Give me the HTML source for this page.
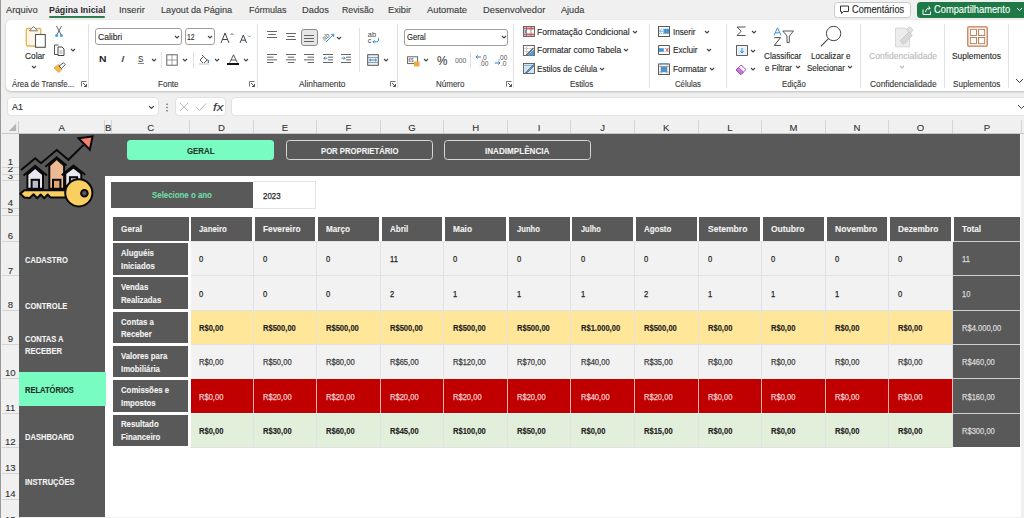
<!DOCTYPE html><html><head><meta charset="utf-8"><title>Excel</title><style>
*{margin:0;padding:0;box-sizing:border-box}
html,body{width:1024px;height:518px;overflow:hidden;background:#f0f0f0;position:relative;font-family:"Liberation Sans", sans-serif}
.a{position:absolute}
.t{position:absolute;white-space:nowrap;line-height:1;transform-origin:0 0}
</style></head><body>
<div class="a" style="left:0px;top:0px;width:1024px;height:518px;background:#f0f0f0;"></div>
<div class="a" style="left:1.5px;top:115.5px;width:1022.5px;height:18.5px;background:#f0f0f0;"></div>
<div class="a" style="left:19px;top:134px;width:1001.5px;height:382.8px;background:#ffffff;"></div>
<div class="a" style="left:1.5px;top:134px;width:17.5px;height:384px;background:#f0f0f0;"></div>
<div class="a" style="left:0px;top:0px;width:1.1px;height:518px;background:#9a9a9a;"></div>
<div class="a" style="left:104.1px;top:120px;width:1px;height:14px;background:#d4d4d4;"></div>
<div class="t" style="left:58.6px;top:123px;font-size:9.59px;color:#303030;-webkit-text-stroke:0.1px #303030;">A</div>
<div class="a" style="left:111.1px;top:120px;width:1px;height:14px;background:#d4d4d4;"></div>
<div class="t" style="left:104.9px;top:123px;font-size:9.59px;color:#303030;-webkit-text-stroke:0.1px #303030;">B</div>
<div class="a" style="left:189.1px;top:120px;width:1px;height:14px;background:#d4d4d4;"></div>
<div class="t" style="left:147.14px;top:123px;font-size:9.59px;color:#303030;-webkit-text-stroke:0.1px #303030;">C</div>
<div class="a" style="left:252.66px;top:120px;width:1px;height:14px;background:#d4d4d4;"></div>
<div class="t" style="left:217.92px;top:123px;font-size:9.59px;color:#303030;-webkit-text-stroke:0.1px #303030;">D</div>
<div class="a" style="left:316.22px;top:120px;width:1px;height:14px;background:#d4d4d4;"></div>
<div class="t" style="left:281.74px;top:123px;font-size:9.59px;color:#303030;-webkit-text-stroke:0.1px #303030;">E</div>
<div class="a" style="left:379.78px;top:120px;width:1px;height:14px;background:#d4d4d4;"></div>
<div class="t" style="left:345.57px;top:123px;font-size:9.59px;color:#303030;-webkit-text-stroke:0.1px #303030;">F</div>
<div class="a" style="left:443.34px;top:120px;width:1px;height:14px;background:#d4d4d4;"></div>
<div class="t" style="left:408.33px;top:123px;font-size:9.59px;color:#303030;-webkit-text-stroke:0.1px #303030;">G</div>
<div class="a" style="left:506.9px;top:120px;width:1px;height:14px;background:#d4d4d4;"></div>
<div class="t" style="left:472.16px;top:123px;font-size:9.59px;color:#303030;-webkit-text-stroke:0.1px #303030;">H</div>
<div class="a" style="left:570.46px;top:120px;width:1px;height:14px;background:#d4d4d4;"></div>
<div class="t" style="left:537.85px;top:123px;font-size:9.59px;color:#303030;-webkit-text-stroke:0.1px #303030;">I</div>
<div class="a" style="left:634.02px;top:120px;width:1px;height:14px;background:#d4d4d4;"></div>
<div class="t" style="left:600.34px;top:123px;font-size:9.59px;color:#303030;-webkit-text-stroke:0.1px #303030;">J</div>
<div class="a" style="left:697.58px;top:120px;width:1px;height:14px;background:#d4d4d4;"></div>
<div class="t" style="left:663.1px;top:123px;font-size:9.59px;color:#303030;-webkit-text-stroke:0.1px #303030;">K</div>
<div class="a" style="left:761.14px;top:120px;width:1px;height:14px;background:#d4d4d4;"></div>
<div class="t" style="left:727.19px;top:123px;font-size:9.59px;color:#303030;-webkit-text-stroke:0.1px #303030;">L</div>
<div class="a" style="left:824.7px;top:120px;width:1px;height:14px;background:#d4d4d4;"></div>
<div class="t" style="left:789.42px;top:123px;font-size:9.59px;color:#303030;-webkit-text-stroke:0.1px #303030;">M</div>
<div class="a" style="left:888.26px;top:120px;width:1px;height:14px;background:#d4d4d4;"></div>
<div class="t" style="left:853.52px;top:123px;font-size:9.59px;color:#303030;-webkit-text-stroke:0.1px #303030;">N</div>
<div class="a" style="left:951.82px;top:120px;width:1px;height:14px;background:#d4d4d4;"></div>
<div class="t" style="left:916.81px;top:123px;font-size:9.59px;color:#303030;-webkit-text-stroke:0.1px #303030;">O</div>
<div class="a" style="left:1021.2px;top:120px;width:1px;height:14px;background:#d4d4d4;"></div>
<div class="t" style="left:983.8px;top:123px;font-size:9.59px;color:#303030;-webkit-text-stroke:0.1px #303030;">P</div>
<div class="a" style="left:1.5px;top:133.2px;width:1022.5px;height:0.8px;background:#c8c8c8;"></div>
<div class="a" style="left:18.4px;top:120.5px;width:0.6px;height:13.5px;background:#c8c8c8;"></div>
<svg class="a" style="left:4px;top:119px;" width="13" height="13" viewBox="0 0 13 13"><path d="M12.1 4.6 L12.1 12.1 L4.9 12.1 Z" fill="#b4b4b4"/></svg>
<div class="a" style="left:1.5px;top:166.9px;width:17.5px;height:1px;background:#d4d4d4;"></div>
<div class="a" style="left:1.5px;top:174.2px;width:17.5px;height:1px;background:#d4d4d4;"></div>
<div class="a" style="left:1.5px;top:180.4px;width:17.5px;height:1px;background:#d4d4d4;"></div>
<div class="a" style="left:1.5px;top:207.9px;width:17.5px;height:1px;background:#d4d4d4;"></div>
<div class="a" style="left:1.5px;top:214.8px;width:17.5px;height:1px;background:#d4d4d4;"></div>
<div class="a" style="left:1.5px;top:241.1px;width:17.5px;height:1px;background:#d4d4d4;"></div>
<div class="a" style="left:1.5px;top:275.4px;width:17.5px;height:1px;background:#d4d4d4;"></div>
<div class="a" style="left:1.5px;top:309.7px;width:17.5px;height:1px;background:#d4d4d4;"></div>
<div class="a" style="left:1.5px;top:344px;width:17.5px;height:1px;background:#d4d4d4;"></div>
<div class="a" style="left:1.5px;top:378.3px;width:17.5px;height:1px;background:#d4d4d4;"></div>
<div class="a" style="left:1.5px;top:412.6px;width:17.5px;height:1px;background:#d4d4d4;"></div>
<div class="a" style="left:1.5px;top:446.9px;width:17.5px;height:1px;background:#d4d4d4;"></div>
<div class="a" style="left:1.5px;top:472.8px;width:17.5px;height:1px;background:#d4d4d4;"></div>
<div class="a" style="left:1.5px;top:498.9px;width:17.5px;height:1px;background:#d4d4d4;"></div>
<div class="a" style="left:1.5px;top:524.5px;width:17.5px;height:1px;background:#d4d4d4;"></div>
<div class="a" style="left:18.5px;top:134px;width:0.5px;height:384px;background:#c8c8c8;"></div>
<div class="a" style="left:1.5px;top:134px;width:17.5px;height:32.9px;overflow:hidden"><div class="t" style="left:6.13px;top:23.08px;font-size:9.59px;color:#333;-webkit-text-stroke:0.12px #333">1</div></div><div class="a" style="left:1.5px;top:167.4px;width:17.5px;height:6.8px;overflow:hidden"><div class="t" style="left:6.13px;top:-3.02px;font-size:9.59px;color:#333;-webkit-text-stroke:0.12px #333">2</div></div><div class="a" style="left:1.5px;top:174.7px;width:17.5px;height:5.7px;overflow:hidden"><div class="t" style="left:6.13px;top:-4.12px;font-size:9.59px;color:#333;-webkit-text-stroke:0.12px #333">3</div></div><div class="a" style="left:1.5px;top:180.9px;width:17.5px;height:27px;overflow:hidden"><div class="t" style="left:6.13px;top:17.18px;font-size:9.59px;color:#333;-webkit-text-stroke:0.12px #333">4</div></div><div class="a" style="left:1.5px;top:208.4px;width:17.5px;height:6.4px;overflow:hidden"><div class="t" style="left:6.13px;top:-3.42px;font-size:9.59px;color:#333;-webkit-text-stroke:0.12px #333">5</div></div><div class="a" style="left:1.5px;top:215.3px;width:17.5px;height:25.8px;overflow:hidden"><div class="t" style="left:6.13px;top:15.98px;font-size:9.59px;color:#333;-webkit-text-stroke:0.12px #333">6</div></div><div class="a" style="left:1.5px;top:241.6px;width:17.5px;height:33.8px;overflow:hidden"><div class="t" style="left:6.13px;top:23.98px;font-size:9.59px;color:#333;-webkit-text-stroke:0.12px #333">7</div></div><div class="a" style="left:1.5px;top:275.9px;width:17.5px;height:33.8px;overflow:hidden"><div class="t" style="left:6.13px;top:23.98px;font-size:9.59px;color:#333;-webkit-text-stroke:0.12px #333">8</div></div><div class="a" style="left:1.5px;top:310.2px;width:17.5px;height:33.8px;overflow:hidden"><div class="t" style="left:6.13px;top:23.98px;font-size:9.59px;color:#333;-webkit-text-stroke:0.12px #333">9</div></div><div class="a" style="left:1.5px;top:344.5px;width:17.5px;height:33.8px;overflow:hidden"><div class="t" style="left:3.46px;top:23.98px;font-size:9.59px;color:#333;-webkit-text-stroke:0.12px #333">10</div></div><div class="a" style="left:1.5px;top:378.8px;width:17.5px;height:33.8px;overflow:hidden"><div class="t" style="left:3.82px;top:23.98px;font-size:9.59px;color:#333;-webkit-text-stroke:0.12px #333">11</div></div><div class="a" style="left:1.5px;top:413.1px;width:17.5px;height:33.8px;overflow:hidden"><div class="t" style="left:3.46px;top:23.98px;font-size:9.59px;color:#333;-webkit-text-stroke:0.12px #333">12</div></div><div class="a" style="left:1.5px;top:447.4px;width:17.5px;height:25.4px;overflow:hidden"><div class="t" style="left:3.46px;top:15.58px;font-size:9.59px;color:#333;-webkit-text-stroke:0.12px #333">13</div></div><div class="a" style="left:1.5px;top:473.3px;width:17.5px;height:25.6px;overflow:hidden"><div class="t" style="left:3.46px;top:15.78px;font-size:9.59px;color:#333;-webkit-text-stroke:0.12px #333">14</div></div><div class="a" style="left:1.5px;top:499.4px;width:17.5px;height:25.1px;overflow:hidden"><div class="t" style="left:3.46px;top:15.28px;font-size:9.59px;color:#333;-webkit-text-stroke:0.12px #333">15</div></div>
<div class="a" style="left:19px;top:134px;width:1001.4px;height:41.5px;background:#595959;"></div>
<div class="a" style="left:19px;top:134px;width:85.9px;height:382.6px;background:#595959;"></div>
<div class="a" style="left:127px;top:139.9px;width:146.5px;height:19.9px;background:#78fcc2;border-radius:3.5px"></div>
<div class="t" style="left:186.75px;top:147px;font-size:8.72px;color:#1e3a2c;font-weight:bold;transform:scaleX(0.9009);-webkit-text-stroke:0.12px #1e3a2c;">GERAL</div>
<div class="a" style="left:286.2px;top:139.9px;width:146.7px;height:20.2px;background:transparent;border:1.2px solid #d6d6d6;border-radius:3.5px"></div>
<div class="t" style="left:320.8px;top:147px;font-size:9.01px;color:#f2f2f2;font-weight:bold;transform:scaleX(0.8551);-webkit-text-stroke:0.12px #f2f2f2;">POR PROPRIETÁRIO</div>
<div class="a" style="left:444.1px;top:139.9px;width:146.7px;height:20.2px;background:transparent;border:1.2px solid #d6d6d6;border-radius:3.5px"></div>
<div class="t" style="left:485.2px;top:147px;font-size:9.01px;color:#f2f2f2;font-weight:bold;transform:scaleX(0.9009);-webkit-text-stroke:0.12px #f2f2f2;">INADIMPLÊNCIA</div>
<div class="a" style="left:111.2px;top:181.8px;width:141.6px;height:26.5px;background:#595959;"></div>
<div class="t" style="left:152px;top:191px;font-size:9.01px;color:#6fdca9;font-weight:bold;transform:scaleX(0.8745);-webkit-text-stroke:0.12px #6fdca9;">Selecione o ano</div>
<div class="a" style="left:252.8px;top:181.4px;width:63.5px;height:27.2px;background:#ffffff;border:1px solid #e3e3e3;border-left:none"></div>
<div class="t" style="left:262.9px;top:192px;font-size:9.16px;color:#222;transform:scaleX(0.8640);-webkit-text-stroke:0.25px #222;">2023</div>
<div class="a" style="left:113px;top:216.5px;width:75.5px;height:24.2px;background:#595959;"></div>
<div class="t" style="left:121.2px;top:224px;font-size:9.45px;color:#f2f2f2;font-weight:bold;transform:scaleX(0.8693);-webkit-text-stroke:0.12px #f2f2f2;">Geral</div>
<div class="a" style="left:191px;top:216.5px;width:60.76px;height:24.2px;background:#595959;"></div>
<div class="t" style="left:199.2px;top:224px;font-size:9.45px;color:#f2f2f2;font-weight:bold;transform:scaleX(0.8302);-webkit-text-stroke:0.12px #f2f2f2;">Janeiro</div>
<div class="a" style="left:254.56px;top:216.5px;width:60.76px;height:24.2px;background:#595959;"></div>
<div class="t" style="left:262.76px;top:224px;font-size:9.45px;color:#f2f2f2;font-weight:bold;transform:scaleX(0.8816);-webkit-text-stroke:0.12px #f2f2f2;">Fevereiro</div>
<div class="a" style="left:318.12px;top:216.5px;width:60.76px;height:24.2px;background:#595959;"></div>
<div class="t" style="left:326.32px;top:224px;font-size:9.45px;color:#f2f2f2;font-weight:bold;transform:scaleX(0.8625);-webkit-text-stroke:0.12px #f2f2f2;">Março</div>
<div class="a" style="left:381.68px;top:216.5px;width:60.76px;height:24.2px;background:#595959;"></div>
<div class="t" style="left:389.88px;top:224px;font-size:9.45px;color:#f2f2f2;font-weight:bold;transform:scaleX(0.8504);-webkit-text-stroke:0.12px #f2f2f2;">Abril</div>
<div class="a" style="left:445.24px;top:216.5px;width:60.76px;height:24.2px;background:#595959;"></div>
<div class="t" style="left:453.44px;top:224px;font-size:9.45px;color:#f2f2f2;font-weight:bold;transform:scaleX(0.8829);-webkit-text-stroke:0.12px #f2f2f2;">Maio</div>
<div class="a" style="left:508.8px;top:216.5px;width:60.76px;height:24.2px;background:#595959;"></div>
<div class="t" style="left:517px;top:224px;font-size:9.45px;color:#f2f2f2;font-weight:bold;transform:scaleX(0.8081);-webkit-text-stroke:0.12px #f2f2f2;">Junho</div>
<div class="a" style="left:572.36px;top:216.5px;width:60.76px;height:24.2px;background:#595959;"></div>
<div class="t" style="left:580.56px;top:224px;font-size:9.45px;color:#f2f2f2;font-weight:bold;transform:scaleX(0.7859);-webkit-text-stroke:0.12px #f2f2f2;">Julho</div>
<div class="a" style="left:635.92px;top:216.5px;width:60.76px;height:24.2px;background:#595959;"></div>
<div class="t" style="left:644.12px;top:224px;font-size:9.45px;color:#f2f2f2;font-weight:bold;transform:scaleX(0.8421);-webkit-text-stroke:0.12px #f2f2f2;">Agosto</div>
<div class="a" style="left:699.48px;top:216.5px;width:60.76px;height:24.2px;background:#595959;"></div>
<div class="t" style="left:707.68px;top:224px;font-size:9.45px;color:#f2f2f2;font-weight:bold;transform:scaleX(0.9042);-webkit-text-stroke:0.12px #f2f2f2;">Setembro</div>
<div class="a" style="left:763.04px;top:216.5px;width:60.76px;height:24.2px;background:#595959;"></div>
<div class="t" style="left:771.24px;top:224px;font-size:9.45px;color:#f2f2f2;font-weight:bold;transform:scaleX(0.8992);-webkit-text-stroke:0.12px #f2f2f2;">Outubro</div>
<div class="a" style="left:826.6px;top:216.5px;width:60.76px;height:24.2px;background:#595959;"></div>
<div class="t" style="left:834.8px;top:224px;font-size:9.45px;color:#f2f2f2;font-weight:bold;transform:scaleX(0.9075);-webkit-text-stroke:0.12px #f2f2f2;">Novembro</div>
<div class="a" style="left:890.16px;top:216.5px;width:60.76px;height:24.2px;background:#595959;"></div>
<div class="t" style="left:898.36px;top:224px;font-size:9.45px;color:#f2f2f2;font-weight:bold;transform:scaleX(0.8823);-webkit-text-stroke:0.12px #f2f2f2;">Dezembro</div>
<div class="a" style="left:953.6px;top:216.5px;width:66.7px;height:24.2px;background:#595959;"></div>
<div class="t" style="left:961.8px;top:224px;font-size:9.45px;color:#f2f2f2;font-weight:bold;transform:scaleX(0.8689);-webkit-text-stroke:0.12px #f2f2f2;">Total</div>
<div class="a" style="left:189.6px;top:241.6px;width:762.7px;height:34.3px;background:#f2f2f2;"></div>
<div class="a" style="left:113.1px;top:243px;width:75.2px;height:31.5px;background:#595959;"></div>
<div class="t" style="left:121.2px;top:249px;font-size:9.16px;color:#f2f2f2;font-weight:bold;transform:scaleX(0.8502);-webkit-text-stroke:0.12px #f2f2f2;">Aluguéis</div>
<div class="t" style="left:121.2px;top:262px;font-size:9.16px;color:#f2f2f2;font-weight:bold;transform:scaleX(0.8502);-webkit-text-stroke:0.12px #f2f2f2;">Iniciados</div>
<div class="t" style="left:199.2px;top:255px;font-size:9.16px;color:#222;transform:scaleX(0.8256);-webkit-text-stroke:0.25px #222;">0</div>
<div class="t" style="left:262.76px;top:255px;font-size:9.16px;color:#222;transform:scaleX(0.8256);-webkit-text-stroke:0.25px #222;">0</div>
<div class="t" style="left:326.32px;top:255px;font-size:9.16px;color:#222;transform:scaleX(0.8256);-webkit-text-stroke:0.25px #222;">0</div>
<div class="t" style="left:389.88px;top:255px;font-size:9.16px;color:#222;transform:scaleX(0.8256);-webkit-text-stroke:0.25px #222;">11</div>
<div class="t" style="left:453.44px;top:255px;font-size:9.16px;color:#222;transform:scaleX(0.8256);-webkit-text-stroke:0.25px #222;">0</div>
<div class="t" style="left:517px;top:255px;font-size:9.16px;color:#222;transform:scaleX(0.8256);-webkit-text-stroke:0.25px #222;">0</div>
<div class="t" style="left:580.56px;top:255px;font-size:9.16px;color:#222;transform:scaleX(0.8256);-webkit-text-stroke:0.25px #222;">0</div>
<div class="t" style="left:644.12px;top:255px;font-size:9.16px;color:#222;transform:scaleX(0.8256);-webkit-text-stroke:0.25px #222;">0</div>
<div class="t" style="left:707.68px;top:255px;font-size:9.16px;color:#222;transform:scaleX(0.8256);-webkit-text-stroke:0.25px #222;">0</div>
<div class="t" style="left:771.24px;top:255px;font-size:9.16px;color:#222;transform:scaleX(0.8256);-webkit-text-stroke:0.25px #222;">0</div>
<div class="t" style="left:834.8px;top:255px;font-size:9.16px;color:#222;transform:scaleX(0.8256);-webkit-text-stroke:0.25px #222;">0</div>
<div class="t" style="left:898.36px;top:255px;font-size:9.16px;color:#222;transform:scaleX(0.8256);-webkit-text-stroke:0.25px #222;">0</div>
<div class="a" style="left:952.5px;top:241.6px;width:67.8px;height:34.3px;background:#595959;"></div>
<div class="a" style="left:952.5px;top:241px;width:67.8px;height:1.2px;background:#cfcfcf;"></div>
<div class="t" style="left:962.3px;top:255px;font-size:9.16px;color:#d8d8d8;transform:scaleX(0.8256);-webkit-text-stroke:0.25px #d8d8d8;">11</div>
<div class="a" style="left:189.6px;top:275.9px;width:762.7px;height:34.3px;background:#f2f2f2;"></div>
<div class="a" style="left:113.1px;top:277.3px;width:75.2px;height:31.5px;background:#595959;"></div>
<div class="t" style="left:121.2px;top:283px;font-size:9.16px;color:#f2f2f2;font-weight:bold;transform:scaleX(0.8502);-webkit-text-stroke:0.12px #f2f2f2;">Vendas</div>
<div class="t" style="left:121.2px;top:296px;font-size:9.16px;color:#f2f2f2;font-weight:bold;transform:scaleX(0.8502);-webkit-text-stroke:0.12px #f2f2f2;">Realizadas</div>
<div class="t" style="left:199.2px;top:290px;font-size:9.16px;color:#222;transform:scaleX(0.8256);-webkit-text-stroke:0.25px #222;">0</div>
<div class="t" style="left:262.76px;top:290px;font-size:9.16px;color:#222;transform:scaleX(0.8256);-webkit-text-stroke:0.25px #222;">0</div>
<div class="t" style="left:326.32px;top:290px;font-size:9.16px;color:#222;transform:scaleX(0.8256);-webkit-text-stroke:0.25px #222;">0</div>
<div class="t" style="left:389.88px;top:290px;font-size:9.16px;color:#222;transform:scaleX(0.8256);-webkit-text-stroke:0.25px #222;">2</div>
<div class="t" style="left:453.44px;top:290px;font-size:9.16px;color:#222;transform:scaleX(0.8256);-webkit-text-stroke:0.25px #222;">1</div>
<div class="t" style="left:517px;top:290px;font-size:9.16px;color:#222;transform:scaleX(0.8256);-webkit-text-stroke:0.25px #222;">1</div>
<div class="t" style="left:580.56px;top:290px;font-size:9.16px;color:#222;transform:scaleX(0.8256);-webkit-text-stroke:0.25px #222;">1</div>
<div class="t" style="left:644.12px;top:290px;font-size:9.16px;color:#222;transform:scaleX(0.8256);-webkit-text-stroke:0.25px #222;">2</div>
<div class="t" style="left:707.68px;top:290px;font-size:9.16px;color:#222;transform:scaleX(0.8256);-webkit-text-stroke:0.25px #222;">1</div>
<div class="t" style="left:771.24px;top:290px;font-size:9.16px;color:#222;transform:scaleX(0.8256);-webkit-text-stroke:0.25px #222;">1</div>
<div class="t" style="left:834.8px;top:290px;font-size:9.16px;color:#222;transform:scaleX(0.8256);-webkit-text-stroke:0.25px #222;">1</div>
<div class="t" style="left:898.36px;top:290px;font-size:9.16px;color:#222;transform:scaleX(0.8256);-webkit-text-stroke:0.25px #222;">0</div>
<div class="a" style="left:952.5px;top:275.9px;width:67.8px;height:34.3px;background:#595959;"></div>
<div class="a" style="left:952.5px;top:275.3px;width:67.8px;height:1.2px;background:#cfcfcf;"></div>
<div class="t" style="left:962.3px;top:290px;font-size:9.16px;color:#d8d8d8;transform:scaleX(0.8256);-webkit-text-stroke:0.25px #d8d8d8;">10</div>
<div class="a" style="left:189.6px;top:310.2px;width:762.7px;height:34.3px;background:#ffe699;"></div>
<div class="a" style="left:113.1px;top:311.6px;width:75.2px;height:31.5px;background:#595959;"></div>
<div class="t" style="left:121.2px;top:318px;font-size:9.16px;color:#f2f2f2;font-weight:bold;transform:scaleX(0.8502);-webkit-text-stroke:0.12px #f2f2f2;">Contas a</div>
<div class="t" style="left:121.2px;top:330px;font-size:9.16px;color:#f2f2f2;font-weight:bold;transform:scaleX(0.8502);-webkit-text-stroke:0.12px #f2f2f2;">Receber</div>
<div class="t" style="left:199.2px;top:324px;font-size:9.16px;color:#222;font-weight:bold;transform:scaleX(0.8256);-webkit-text-stroke:0.12px #222;">R$0,00</div>
<div class="t" style="left:262.76px;top:324px;font-size:9.16px;color:#222;font-weight:bold;transform:scaleX(0.8256);-webkit-text-stroke:0.12px #222;">R$500,00</div>
<div class="t" style="left:326.32px;top:324px;font-size:9.16px;color:#222;font-weight:bold;transform:scaleX(0.8256);-webkit-text-stroke:0.12px #222;">R$500,00</div>
<div class="t" style="left:389.88px;top:324px;font-size:9.16px;color:#222;font-weight:bold;transform:scaleX(0.8256);-webkit-text-stroke:0.12px #222;">R$500,00</div>
<div class="t" style="left:453.44px;top:324px;font-size:9.16px;color:#222;font-weight:bold;transform:scaleX(0.8256);-webkit-text-stroke:0.12px #222;">R$500,00</div>
<div class="t" style="left:517px;top:324px;font-size:9.16px;color:#222;font-weight:bold;transform:scaleX(0.8256);-webkit-text-stroke:0.12px #222;">R$500,00</div>
<div class="t" style="left:580.56px;top:324px;font-size:9.16px;color:#222;font-weight:bold;transform:scaleX(0.8256);-webkit-text-stroke:0.12px #222;">R$1.000,00</div>
<div class="t" style="left:644.12px;top:324px;font-size:9.16px;color:#222;font-weight:bold;transform:scaleX(0.8256);-webkit-text-stroke:0.12px #222;">R$500,00</div>
<div class="t" style="left:707.68px;top:324px;font-size:9.16px;color:#222;font-weight:bold;transform:scaleX(0.8256);-webkit-text-stroke:0.12px #222;">R$0,00</div>
<div class="t" style="left:771.24px;top:324px;font-size:9.16px;color:#222;font-weight:bold;transform:scaleX(0.8256);-webkit-text-stroke:0.12px #222;">R$0,00</div>
<div class="t" style="left:834.8px;top:324px;font-size:9.16px;color:#222;font-weight:bold;transform:scaleX(0.8256);-webkit-text-stroke:0.12px #222;">R$0,00</div>
<div class="t" style="left:898.36px;top:324px;font-size:9.16px;color:#222;font-weight:bold;transform:scaleX(0.8256);-webkit-text-stroke:0.12px #222;">R$0,00</div>
<div class="a" style="left:952.5px;top:310.2px;width:67.8px;height:34.3px;background:#595959;"></div>
<div class="a" style="left:952.5px;top:309.6px;width:67.8px;height:1.2px;background:#cfcfcf;"></div>
<div class="t" style="left:962.3px;top:324px;font-size:9.16px;color:#d8d8d8;transform:scaleX(0.8256);-webkit-text-stroke:0.25px #d8d8d8;">R$4.000,00</div>
<div class="a" style="left:189.6px;top:344.5px;width:762.7px;height:34.3px;background:#f2f2f2;"></div>
<div class="a" style="left:113.1px;top:345.9px;width:75.2px;height:31.5px;background:#595959;"></div>
<div class="t" style="left:121.2px;top:352px;font-size:9.16px;color:#f2f2f2;font-weight:bold;transform:scaleX(0.8502);-webkit-text-stroke:0.12px #f2f2f2;">Valores para</div>
<div class="t" style="left:121.2px;top:365px;font-size:9.16px;color:#f2f2f2;font-weight:bold;transform:scaleX(0.8502);-webkit-text-stroke:0.12px #f2f2f2;">Imobiliária</div>
<div class="t" style="left:199.2px;top:358px;font-size:9.16px;color:#3c3c3c;transform:scaleX(0.8256);-webkit-text-stroke:0.25px #3c3c3c;">R$0,00</div>
<div class="t" style="left:262.76px;top:358px;font-size:9.16px;color:#3c3c3c;transform:scaleX(0.8256);-webkit-text-stroke:0.25px #3c3c3c;">R$50,00</div>
<div class="t" style="left:326.32px;top:358px;font-size:9.16px;color:#3c3c3c;transform:scaleX(0.8256);-webkit-text-stroke:0.25px #3c3c3c;">R$80,00</div>
<div class="t" style="left:389.88px;top:358px;font-size:9.16px;color:#3c3c3c;transform:scaleX(0.8256);-webkit-text-stroke:0.25px #3c3c3c;">R$65,00</div>
<div class="t" style="left:453.44px;top:358px;font-size:9.16px;color:#3c3c3c;transform:scaleX(0.8256);-webkit-text-stroke:0.25px #3c3c3c;">R$120,00</div>
<div class="t" style="left:517px;top:358px;font-size:9.16px;color:#3c3c3c;transform:scaleX(0.8256);-webkit-text-stroke:0.25px #3c3c3c;">R$70,00</div>
<div class="t" style="left:580.56px;top:358px;font-size:9.16px;color:#3c3c3c;transform:scaleX(0.8256);-webkit-text-stroke:0.25px #3c3c3c;">R$40,00</div>
<div class="t" style="left:644.12px;top:358px;font-size:9.16px;color:#3c3c3c;transform:scaleX(0.8256);-webkit-text-stroke:0.25px #3c3c3c;">R$35,00</div>
<div class="t" style="left:707.68px;top:358px;font-size:9.16px;color:#3c3c3c;transform:scaleX(0.8256);-webkit-text-stroke:0.25px #3c3c3c;">R$0,00</div>
<div class="t" style="left:771.24px;top:358px;font-size:9.16px;color:#3c3c3c;transform:scaleX(0.8256);-webkit-text-stroke:0.25px #3c3c3c;">R$0,00</div>
<div class="t" style="left:834.8px;top:358px;font-size:9.16px;color:#3c3c3c;transform:scaleX(0.8256);-webkit-text-stroke:0.25px #3c3c3c;">R$0,00</div>
<div class="t" style="left:898.36px;top:358px;font-size:9.16px;color:#3c3c3c;transform:scaleX(0.8256);-webkit-text-stroke:0.25px #3c3c3c;">R$0,00</div>
<div class="a" style="left:952.5px;top:344.5px;width:67.8px;height:34.3px;background:#595959;"></div>
<div class="a" style="left:952.5px;top:343.9px;width:67.8px;height:1.2px;background:#cfcfcf;"></div>
<div class="t" style="left:962.3px;top:358px;font-size:9.16px;color:#d8d8d8;transform:scaleX(0.8256);-webkit-text-stroke:0.25px #d8d8d8;">R$460,00</div>
<div class="a" style="left:189.6px;top:378.8px;width:762.7px;height:34.3px;background:#c00000;"></div>
<div class="a" style="left:113.1px;top:380.2px;width:75.2px;height:31.5px;background:#595959;"></div>
<div class="t" style="left:121.2px;top:386px;font-size:9.16px;color:#f2f2f2;font-weight:bold;transform:scaleX(0.8502);-webkit-text-stroke:0.12px #f2f2f2;">Comissões e</div>
<div class="t" style="left:121.2px;top:399px;font-size:9.16px;color:#f2f2f2;font-weight:bold;transform:scaleX(0.8502);-webkit-text-stroke:0.12px #f2f2f2;">Impostos</div>
<div class="t" style="left:199.2px;top:393px;font-size:9.16px;color:#f6d0d0;transform:scaleX(0.8256);-webkit-text-stroke:0.25px #f6d0d0;">R$0,00</div>
<div class="t" style="left:262.76px;top:393px;font-size:9.16px;color:#f6d0d0;transform:scaleX(0.8256);-webkit-text-stroke:0.25px #f6d0d0;">R$20,00</div>
<div class="t" style="left:326.32px;top:393px;font-size:9.16px;color:#f6d0d0;transform:scaleX(0.8256);-webkit-text-stroke:0.25px #f6d0d0;">R$20,00</div>
<div class="t" style="left:389.88px;top:393px;font-size:9.16px;color:#f6d0d0;transform:scaleX(0.8256);-webkit-text-stroke:0.25px #f6d0d0;">R$20,00</div>
<div class="t" style="left:453.44px;top:393px;font-size:9.16px;color:#f6d0d0;transform:scaleX(0.8256);-webkit-text-stroke:0.25px #f6d0d0;">R$20,00</div>
<div class="t" style="left:517px;top:393px;font-size:9.16px;color:#f6d0d0;transform:scaleX(0.8256);-webkit-text-stroke:0.25px #f6d0d0;">R$20,00</div>
<div class="t" style="left:580.56px;top:393px;font-size:9.16px;color:#f6d0d0;transform:scaleX(0.8256);-webkit-text-stroke:0.25px #f6d0d0;">R$40,00</div>
<div class="t" style="left:644.12px;top:393px;font-size:9.16px;color:#f6d0d0;transform:scaleX(0.8256);-webkit-text-stroke:0.25px #f6d0d0;">R$20,00</div>
<div class="t" style="left:707.68px;top:393px;font-size:9.16px;color:#f6d0d0;transform:scaleX(0.8256);-webkit-text-stroke:0.25px #f6d0d0;">R$0,00</div>
<div class="t" style="left:771.24px;top:393px;font-size:9.16px;color:#f6d0d0;transform:scaleX(0.8256);-webkit-text-stroke:0.25px #f6d0d0;">R$0,00</div>
<div class="t" style="left:834.8px;top:393px;font-size:9.16px;color:#f6d0d0;transform:scaleX(0.8256);-webkit-text-stroke:0.25px #f6d0d0;">R$0,00</div>
<div class="t" style="left:898.36px;top:393px;font-size:9.16px;color:#f6d0d0;transform:scaleX(0.8256);-webkit-text-stroke:0.25px #f6d0d0;">R$0,00</div>
<div class="a" style="left:952.5px;top:378.8px;width:67.8px;height:34.3px;background:#595959;"></div>
<div class="a" style="left:952.5px;top:378.2px;width:67.8px;height:1.2px;background:#cfcfcf;"></div>
<div class="t" style="left:962.3px;top:393px;font-size:9.16px;color:#d8d8d8;transform:scaleX(0.8256);-webkit-text-stroke:0.25px #d8d8d8;">R$160,00</div>
<div class="a" style="left:189.6px;top:413.1px;width:762.7px;height:34.3px;background:#e2efda;"></div>
<div class="a" style="left:113.1px;top:414.5px;width:75.2px;height:31.5px;background:#595959;"></div>
<div class="t" style="left:121.2px;top:420px;font-size:9.16px;color:#f2f2f2;font-weight:bold;transform:scaleX(0.8502);-webkit-text-stroke:0.12px #f2f2f2;">Resultado</div>
<div class="t" style="left:121.2px;top:433px;font-size:9.16px;color:#f2f2f2;font-weight:bold;transform:scaleX(0.8502);-webkit-text-stroke:0.12px #f2f2f2;">Financeiro</div>
<div class="t" style="left:199.2px;top:427px;font-size:9.16px;color:#222;font-weight:bold;transform:scaleX(0.8256);-webkit-text-stroke:0.12px #222;">R$0,00</div>
<div class="t" style="left:262.76px;top:427px;font-size:9.16px;color:#222;font-weight:bold;transform:scaleX(0.8256);-webkit-text-stroke:0.12px #222;">R$30,00</div>
<div class="t" style="left:326.32px;top:427px;font-size:9.16px;color:#222;font-weight:bold;transform:scaleX(0.8256);-webkit-text-stroke:0.12px #222;">R$60,00</div>
<div class="t" style="left:389.88px;top:427px;font-size:9.16px;color:#222;font-weight:bold;transform:scaleX(0.8256);-webkit-text-stroke:0.12px #222;">R$45,00</div>
<div class="t" style="left:453.44px;top:427px;font-size:9.16px;color:#222;font-weight:bold;transform:scaleX(0.8256);-webkit-text-stroke:0.12px #222;">R$100,00</div>
<div class="t" style="left:517px;top:427px;font-size:9.16px;color:#222;font-weight:bold;transform:scaleX(0.8256);-webkit-text-stroke:0.12px #222;">R$50,00</div>
<div class="t" style="left:580.56px;top:427px;font-size:9.16px;color:#222;font-weight:bold;transform:scaleX(0.8256);-webkit-text-stroke:0.12px #222;">R$0,00</div>
<div class="t" style="left:644.12px;top:427px;font-size:9.16px;color:#222;font-weight:bold;transform:scaleX(0.8256);-webkit-text-stroke:0.12px #222;">R$15,00</div>
<div class="t" style="left:707.68px;top:427px;font-size:9.16px;color:#222;font-weight:bold;transform:scaleX(0.8256);-webkit-text-stroke:0.12px #222;">R$0,00</div>
<div class="t" style="left:771.24px;top:427px;font-size:9.16px;color:#222;font-weight:bold;transform:scaleX(0.8256);-webkit-text-stroke:0.12px #222;">R$0,00</div>
<div class="t" style="left:834.8px;top:427px;font-size:9.16px;color:#222;font-weight:bold;transform:scaleX(0.8256);-webkit-text-stroke:0.12px #222;">R$0,00</div>
<div class="t" style="left:898.36px;top:427px;font-size:9.16px;color:#222;font-weight:bold;transform:scaleX(0.8256);-webkit-text-stroke:0.12px #222;">R$0,00</div>
<div class="a" style="left:952.5px;top:413.1px;width:67.8px;height:34.3px;background:#595959;"></div>
<div class="a" style="left:952.5px;top:412.5px;width:67.8px;height:1.2px;background:#cfcfcf;"></div>
<div class="t" style="left:962.3px;top:427px;font-size:9.16px;color:#d8d8d8;transform:scaleX(0.8256);-webkit-text-stroke:0.25px #d8d8d8;">R$300,00</div>
<div class="a" style="left:189.6px;top:241.1px;width:762.7px;height:1px;background:#e2e2e2;"></div>
<div class="a" style="left:189.6px;top:275.4px;width:762.7px;height:1px;background:#e2e2e2;"></div>
<div class="a" style="left:189.6px;top:309.7px;width:762.7px;height:1px;background:#e2e2e2;"></div>
<div class="a" style="left:189.6px;top:344px;width:762.7px;height:1px;background:#e2e2e2;"></div>
<div class="a" style="left:189.6px;top:378.3px;width:762.7px;height:1px;background:#e2e2e2;"></div>
<div class="a" style="left:189.6px;top:412.6px;width:762.7px;height:1px;background:#e2e2e2;"></div>
<div class="a" style="left:189.6px;top:446.9px;width:762.7px;height:1px;background:#e2e2e2;"></div>
<div class="a" style="left:189.1px;top:241.6px;width:1px;height:205.8px;background:#e2e2e2;"></div>
<div class="a" style="left:252.66px;top:241.6px;width:1px;height:205.8px;background:#e2e2e2;"></div>
<div class="a" style="left:316.22px;top:241.6px;width:1px;height:205.8px;background:#e2e2e2;"></div>
<div class="a" style="left:379.78px;top:241.6px;width:1px;height:205.8px;background:#e2e2e2;"></div>
<div class="a" style="left:443.34px;top:241.6px;width:1px;height:205.8px;background:#e2e2e2;"></div>
<div class="a" style="left:506.9px;top:241.6px;width:1px;height:205.8px;background:#e2e2e2;"></div>
<div class="a" style="left:570.46px;top:241.6px;width:1px;height:205.8px;background:#e2e2e2;"></div>
<div class="a" style="left:634.02px;top:241.6px;width:1px;height:205.8px;background:#e2e2e2;"></div>
<div class="a" style="left:697.58px;top:241.6px;width:1px;height:205.8px;background:#e2e2e2;"></div>
<div class="a" style="left:761.14px;top:241.6px;width:1px;height:205.8px;background:#e2e2e2;"></div>
<div class="a" style="left:824.7px;top:241.6px;width:1px;height:205.8px;background:#e2e2e2;"></div>
<div class="a" style="left:888.26px;top:241.6px;width:1px;height:205.8px;background:#e2e2e2;"></div>
<div class="a" style="left:951.82px;top:241.6px;width:1px;height:205.8px;background:#e2e2e2;"></div>
<div class="a" style="left:189.6px;top:377.6px;width:762.7px;height:1.4px;background:#fbf3f3;"></div>
<div class="a" style="left:189.6px;top:412.9px;width:762.7px;height:1.2px;background:#f7faf5;"></div>
<div class="a" style="left:189.1px;top:378.8px;width:1px;height:34.3px;background:#e9b3b3;"></div>
<div class="a" style="left:252.66px;top:378.8px;width:1px;height:34.3px;background:#e9b3b3;"></div>
<div class="a" style="left:316.22px;top:378.8px;width:1px;height:34.3px;background:#e9b3b3;"></div>
<div class="a" style="left:379.78px;top:378.8px;width:1px;height:34.3px;background:#e9b3b3;"></div>
<div class="a" style="left:443.34px;top:378.8px;width:1px;height:34.3px;background:#e9b3b3;"></div>
<div class="a" style="left:506.9px;top:378.8px;width:1px;height:34.3px;background:#e9b3b3;"></div>
<div class="a" style="left:570.46px;top:378.8px;width:1px;height:34.3px;background:#e9b3b3;"></div>
<div class="a" style="left:634.02px;top:378.8px;width:1px;height:34.3px;background:#e9b3b3;"></div>
<div class="a" style="left:697.58px;top:378.8px;width:1px;height:34.3px;background:#e9b3b3;"></div>
<div class="a" style="left:761.14px;top:378.8px;width:1px;height:34.3px;background:#e9b3b3;"></div>
<div class="a" style="left:824.7px;top:378.8px;width:1px;height:34.3px;background:#e9b3b3;"></div>
<div class="a" style="left:888.26px;top:378.8px;width:1px;height:34.3px;background:#e9b3b3;"></div>
<div class="a" style="left:951.82px;top:378.8px;width:1px;height:34.3px;background:#e9b3b3;"></div>
<div class="a" style="left:188.3px;top:241.6px;width:2.3px;height:205.8px;background:#ffffff;"></div>
<div class="a" style="left:18.9px;top:371.7px;width:87.4px;height:34.3px;background:#78fcc2;"></div>
<div class="t" style="left:24.7px;top:256px;font-size:8.58px;color:#f2f2f2;font-weight:bold;transform:scaleX(0.8795);-webkit-text-stroke:0.12px #f2f2f2;">CADASTRO</div>
<div class="t" style="left:24.7px;top:302px;font-size:8.58px;color:#f2f2f2;font-weight:bold;transform:scaleX(0.8795);-webkit-text-stroke:0.12px #f2f2f2;">CONTROLE</div>
<div class="t" style="left:24.7px;top:335px;font-size:8.58px;color:#f2f2f2;font-weight:bold;transform:scaleX(0.8795);-webkit-text-stroke:0.12px #f2f2f2;">CONTAS A</div>
<div class="t" style="left:24.7px;top:347px;font-size:8.58px;color:#f2f2f2;font-weight:bold;transform:scaleX(0.8795);-webkit-text-stroke:0.12px #f2f2f2;">RECEBER</div>
<div class="t" style="left:24.7px;top:386px;font-size:8.58px;color:#1e2e26;font-weight:bold;transform:scaleX(0.8795);-webkit-text-stroke:0.12px #1e2e26;">RELATÓRIOS</div>
<div class="t" style="left:24.7px;top:433px;font-size:8.58px;color:#f2f2f2;font-weight:bold;transform:scaleX(0.8795);-webkit-text-stroke:0.12px #f2f2f2;">DASHBOARD</div>
<div class="t" style="left:24.7px;top:478px;font-size:8.58px;color:#f2f2f2;font-weight:bold;transform:scaleX(0.8795);-webkit-text-stroke:0.12px #f2f2f2;">INSTRUÇÕES</div>
<svg class="a" style="left:18px;top:134px;" width="80" height="75" viewBox="0 0 80 75">
<g fill="none" stroke="#0a0a0a" stroke-width="2.0" stroke-linejoin="miter" stroke-linecap="butt">
<path d="M3.1 35.9 L17.2 24.2 L23 29.3 L38.7 16 L50.4 25.8 L65.6 10.9"/>
</g>
<path d="M60.5 4.2 L74.6 2.4 L71.8 15.8 Z" fill="#f8806f" stroke="#0a0a0a" stroke-width="2.0" stroke-linejoin="miter"/>
<path d="M31.3 31.5 L38.7 24.8 L46.1 31.5 L46.1 54.8 L31.3 54.8 Z" fill="#ebb994" stroke="#0a0a0a" stroke-width="2.0"/>
<path d="M27.3 32.8 L38.7 23.2 L48.5 31.5" fill="none" stroke="#0a0a0a" stroke-width="2.0"/>
<rect x="35" y="45.8" width="7.4" height="9" fill="#e3a572" stroke="#0a0a0a" stroke-width="2.0"/>
<path d="M9.4 40.5 L17.2 33.8 L25 40.5 L25 54.8 L9.4 54.8 Z" fill="#e8e9ee" stroke="#0a0a0a" stroke-width="2.0"/>
<path d="M5.5 41.5 L17.2 31.8 L28.9 41.5" fill="none" stroke="#0a0a0a" stroke-width="2.0"/>
<rect x="13.6" y="45.8" width="7.4" height="9" fill="#b9bccb" stroke="#0a0a0a" stroke-width="2.0"/>
<path d="M47.3 39.5 L55.5 33.5 L63.3 39.5 L63.3 52 L47.3 52 Z" fill="#e8e9ee" stroke="#0a0a0a" stroke-width="2.0"/>
<path d="M43.7 41.2 L55.5 31.5 L67.2 40.8" fill="none" stroke="#0a0a0a" stroke-width="2.0"/>
<rect x="51.9" y="43.2" width="7.2" height="6" fill="#b9bccb" stroke="#0a0a0a" stroke-width="2.0"/>
<path d="M2.3 59.8 L6.3 56.2 L62 56.2 L62 63.4 L32.4 63.4 L29.7 60.5 L26.2 64.2 L22.7 60.5 L19.2 64.2 L15.6 60.3 L11.7 64 L6.3 63.4 Z" fill="#f9cf5f" stroke="#0a0a0a" stroke-width="2.0" stroke-linejoin="round"/>
<circle cx="60.8" cy="58.8" r="13.6" fill="#f9cf5f" stroke="#0a0a0a" stroke-width="2.0"/>
<circle cx="66.4" cy="59.3" r="3.3" fill="#595959" stroke="#0a0a0a" stroke-width="2.0"/>
</svg>
<div class="t" style="left:6.3px;top:5px;font-size:9.59px;color:#3b3b3b;transform:scaleX(0.9776);-webkit-text-stroke:0.12px #3b3b3b;">Arquivo</div>
<div class="t" style="left:48.9px;top:5px;font-size:9.59px;color:#2b2b2b;font-weight:bold;transform:scaleX(0.9215);">Página Inicial</div>
<div class="t" style="left:119px;top:5px;font-size:9.59px;color:#3b3b3b;transform:scaleX(0.9680);-webkit-text-stroke:0.12px #3b3b3b;">Inserir</div>
<div class="t" style="left:160.6px;top:5px;font-size:9.59px;color:#3b3b3b;transform:scaleX(0.9535);-webkit-text-stroke:0.12px #3b3b3b;">Layout da Página</div>
<div class="t" style="left:248.5px;top:5px;font-size:9.59px;color:#3b3b3b;transform:scaleX(0.9380);-webkit-text-stroke:0.12px #3b3b3b;">Fórmulas</div>
<div class="t" style="left:301.6px;top:5px;font-size:9.59px;color:#3b3b3b;transform:scaleX(0.9700);-webkit-text-stroke:0.12px #3b3b3b;">Dados</div>
<div class="t" style="left:342.3px;top:5px;font-size:9.59px;color:#3b3b3b;transform:scaleX(0.9146);-webkit-text-stroke:0.12px #3b3b3b;">Revisão</div>
<div class="t" style="left:388.2px;top:5px;font-size:9.59px;color:#3b3b3b;transform:scaleX(0.9671);-webkit-text-stroke:0.12px #3b3b3b;">Exibir</div>
<div class="t" style="left:426.9px;top:5px;font-size:9.59px;color:#3b3b3b;transform:scaleX(0.9766);-webkit-text-stroke:0.12px #3b3b3b;">Automate</div>
<div class="t" style="left:483.1px;top:5px;font-size:9.59px;color:#3b3b3b;transform:scaleX(0.9751);-webkit-text-stroke:0.12px #3b3b3b;">Desenvolvedor</div>
<div class="t" style="left:561.1px;top:5px;font-size:9.59px;color:#3b3b3b;transform:scaleX(0.9537);-webkit-text-stroke:0.12px #3b3b3b;">Ajuda</div>
<div class="a" style="left:48.9px;top:15.8px;width:56.5px;height:2.1px;background:#2f7d50;border-radius:1px"></div>
<div class="a" style="left:834.3px;top:1.6px;width:76.3px;height:16.6px;background:#ffffff;border:1px solid #c9c9c9;border-radius:3.5px"></div>
<svg class="a" style="left:839px;top:4px;" width="11" height="11" viewBox="0 0 11 11"><path d="M1.5 2 H9.5 V7.5 H4.5 L2.5 9.5 V7.5 H1.5 Z" fill="none" stroke="#333" stroke-width="1"/></svg>
<div class="t" style="left:851.5px;top:5px;font-size:10.17px;color:#262626;transform:scaleX(0.9050);-webkit-text-stroke:0.12px #262626;">Comentários</div>
<div class="a" style="left:917px;top:1.6px;width:117px;height:16.6px;background:#1d7a46;border-radius:3.5px"></div>
<svg class="a" style="left:921px;top:3.5px;" width="11" height="12" viewBox="0 0 11 12"><path d="M2 5.5 V10.5 H9.5 V7.5" fill="none" stroke="#fff" stroke-width="1"/><path d="M4.5 8 C4.8 5.5 6.5 4 9 4 M7.5 2.3 L9.3 4 L7.5 5.8" fill="none" stroke="#fff" stroke-width="1"/></svg>
<div class="t" style="left:934px;top:5px;font-size:10.17px;color:#ffffff;transform:scaleX(0.9166);-webkit-text-stroke:0.12px #ffffff;">Compartilhamento</div>
<svg class="a" style="left:1016px;top:7px;" width="7" height="5" viewBox="0 0 7 5"><path d="M1 1 L3.5 3.5 L6 1" fill="none" stroke="#fff" stroke-width="1"/></svg>
<div class="a" style="left:6.3px;top:20.3px;width:1033.7px;height:70.9px;background:#ffffff;border-radius:5px;box-shadow:0 1px 2.5px rgba(0,0,0,0.22)"></div>
<div class="a" style="left:88.1px;top:23.5px;width:0.9px;height:64.5px;background:#e1e1e1;"></div>
<div class="a" style="left:256.9px;top:23.5px;width:0.9px;height:64.5px;background:#e1e1e1;"></div>
<div class="a" style="left:397.4px;top:23.5px;width:0.9px;height:64.5px;background:#e1e1e1;"></div>
<div class="a" style="left:513px;top:23.5px;width:0.9px;height:64.5px;background:#e1e1e1;"></div>
<div class="a" style="left:649.1px;top:23.5px;width:0.9px;height:64.5px;background:#e1e1e1;"></div>
<div class="a" style="left:726.4px;top:23.5px;width:0.9px;height:64.5px;background:#e1e1e1;"></div>
<div class="a" style="left:860.4px;top:23.5px;width:0.9px;height:64.5px;background:#e1e1e1;"></div>
<div class="a" style="left:944.2px;top:23.5px;width:0.9px;height:64.5px;background:#e1e1e1;"></div>
<div class="a" style="left:1008.1px;top:23.5px;width:0.9px;height:64.5px;background:#e1e1e1;"></div>
<div class="a" style="left:161.3px;top:51.6px;width:0.9px;height:16.6px;background:#e1e1e1;"></div>
<div class="a" style="left:193.4px;top:51.6px;width:0.9px;height:16.6px;background:#e1e1e1;"></div>
<div class="a" style="left:359px;top:28px;width:0.9px;height:44px;background:#e1e1e1;"></div>
<div class="a" style="left:470.2px;top:52px;width:0.9px;height:16px;background:#e1e1e1;"></div>
<div class="t" style="left:12px;top:81px;font-size:8.28px;color:#3a3a3a;transform:scaleX(0.9460);-webkit-text-stroke:0.12px #3a3a3a;">Área de Transfe...</div>
<svg class="a" style="left:80.8px;top:81.3px;" width="6" height="6" viewBox="0 0 6 6"><path d="M0.5 5.5 V0.5 H5.5" fill="none" stroke="#666" stroke-width="0.9"/><path d="M2 2 L5.5 5.5 M3 5.5 H5.5 V3" fill="none" stroke="#444" stroke-width="0.9"/></svg>
<svg class="a" style="left:25px;top:25px;" width="22" height="24" viewBox="0 0 22 24"><rect x="1.3" y="3.5" width="14.5" height="17.5" rx="1.5" fill="#fdf7ea" stroke="#e6b450" stroke-width="1.3"/><path d="M4.5 5.8 L8.5 1.5 L12.5 5.8 Z" fill="#fff" stroke="#777" stroke-width="1"/><rect x="10.5" y="9.5" width="9.8" height="12.8" fill="#fff" stroke="#555" stroke-width="1.1"/></svg>
<div class="t" style="left:24.8px;top:52px;font-size:8.72px;color:#262626;transform:scaleX(0.9548);-webkit-text-stroke:0.12px #262626;">Colar</div>
<svg class="a" style="left:31px;top:64.8px;" width="6" height="4" viewBox="0 0 6 4"><path d="M1 1 L3 3 L5 1" fill="none" stroke="#444" stroke-width="1.1"/></svg>
<svg class="a" style="left:54px;top:25px;" width="10" height="13" viewBox="0 0 10 13"><path d="M2.5 1 L7.2 10 M7.5 1 L2.8 10" stroke="#555" stroke-width="0.9" fill="none"/><circle cx="2.6" cy="10.6" r="1.5" fill="#4aa3df"/><circle cx="7.4" cy="10.6" r="1.5" fill="#4aa3df"/></svg>
<svg class="a" style="left:52.5px;top:43.5px;" width="12" height="12" viewBox="0 0 12 12"><path d="M5 10.5 H1.5 V1 H5.5" fill="none" stroke="#555" stroke-width="1"/><path d="M5 3 H9 L11 5 V11.5 H5 Z" fill="#fff" stroke="#444" stroke-width="1"/><path d="M6.5 7 H9.5 M6.5 9 H9.5" stroke="#777" stroke-width="0.7"/></svg>
<svg class="a" style="left:69.6px;top:48px;" width="6" height="4" viewBox="0 0 6 4"><path d="M1 1 L3 3 L5 1" fill="none" stroke="#444" stroke-width="1.1"/></svg>
<svg class="a" style="left:52.5px;top:62px;" width="13" height="12" viewBox="0 0 13 12"><path d="M1 6 L5.5 2.5 L9 7 L6 10.5 Z" fill="#f3b94c" stroke="#e09a2a" stroke-width="0.8"/><path d="M6 4 L10.5 0.8 L12.2 2.5 L8.5 6.5 Z" fill="#fff" stroke="#444" stroke-width="0.9"/></svg>
<div class="a" style="left:95.2px;top:28.3px;width:87px;height:17.2px;background:#fff;border:1px solid #9f9f9f;border-radius:3px"></div>
<div class="t" style="left:97.5px;top:33px;font-size:9.01px;color:#262626;transform:scaleX(0.9514);-webkit-text-stroke:0.12px #262626;">Calibri</div>
<svg class="a" style="left:174.2px;top:35.2px;" width="6" height="4" viewBox="0 0 6 4"><path d="M1 1 L3 3 L5 1" fill="none" stroke="#444" stroke-width="1.1"/></svg>
<div class="a" style="left:184.7px;top:28.3px;width:30px;height:17.2px;background:#fff;border:1px solid #9f9f9f;border-radius:3px"></div>
<div class="t" style="left:187.3px;top:33px;font-size:9.01px;color:#262626;transform:scaleX(0.7582);-webkit-text-stroke:0.12px #262626;">12</div>
<svg class="a" style="left:207px;top:35.2px;" width="6" height="4" viewBox="0 0 6 4"><path d="M1 1 L3 3 L5 1" fill="none" stroke="#444" stroke-width="1.1"/></svg>
<svg class="a" style="left:219.5px;top:31.5px;" width="16" height="12" viewBox="0 0 16 12"><path d="M1 11 L5 1 L9 11 M2.5 7.5 H7.5" fill="none" stroke="#444" stroke-width="1"/><path d="M10.5 3 L12 1.5 L13.5 3" fill="none" stroke="#444" stroke-width="0.8"/></svg>
<svg class="a" style="left:239px;top:33.5px;" width="13" height="10" viewBox="0 0 13 10"><path d="M1 9 L4.3 1 L7.6 9 M2.2 6.2 H6.4" fill="none" stroke="#444" stroke-width="1"/><path d="M9 1.5 L10.5 3 L12 1.5" fill="none" stroke="#3b8fd0" stroke-width="0.8"/></svg>
<div class="t" style="left:99.1px;top:54px;font-size:9.59px;color:#262626;font-weight:bold;transform:scaleX(1.0826);">N</div>
<div class="t" style="left:120.5px;top:54px;font-size:9.59px;color:#444;transform:scaleX(1.3146);font-style:italic;-webkit-text-stroke:0.12px #444;font-family:"Liberation Serif",serif;">I</div>
<div class="t" style="left:138.4px;top:55px;font-size:9.3px;color:#444;transform:scaleX(0.8703);-webkit-text-stroke:0.12px #444;">S</div>
<div class="a" style="left:138px;top:63.3px;width:6.3px;height:1px;background:#888;"></div>
<svg class="a" style="left:150.5px;top:57.6px;" width="6" height="4" viewBox="0 0 6 4"><path d="M1 1 L3 3 L5 1" fill="none" stroke="#444" stroke-width="1.1"/></svg>
<svg class="a" style="left:165.5px;top:53.5px;" width="12" height="12" viewBox="0 0 12 12"><rect x="0.8" y="0.8" width="10.4" height="10.4" fill="none" stroke="#555" stroke-width="0.9"/><path d="M6 0.8 V11.2 M0.8 6 H11.2" stroke="#777" stroke-width="0.7"/></svg>
<svg class="a" style="left:182.1px;top:57.6px;" width="6" height="4" viewBox="0 0 6 4"><path d="M1 1 L3 3 L5 1" fill="none" stroke="#444" stroke-width="1.1"/></svg>
<svg class="a" style="left:198px;top:53.5px;" width="12" height="12" viewBox="0 0 12 12"><path d="M2 6 L5.5 2.5 L9 6 L5.5 9.5 Z" fill="#fff" stroke="#444" stroke-width="0.9"/><path d="M4 1 L5.6 2.6" stroke="#444" stroke-width="0.9"/><path d="M9.5 5.5 Q11 7 10.2 9" fill="none" stroke="#2f6fa8" stroke-width="1.2"/></svg>
<div class="a" style="left:198.5px;top:63.4px;width:10.5px;height:1.9px;background:#e0e0e0;"></div>
<svg class="a" style="left:213.6px;top:57.6px;" width="6" height="4" viewBox="0 0 6 4"><path d="M1 1 L3 3 L5 1" fill="none" stroke="#444" stroke-width="1.1"/></svg>
<svg class="a" style="left:228.5px;top:54px;" width="9" height="9" viewBox="0 0 9 9"><path d="M0.8 8.5 L4.5 0.8 L8.2 8.5 M2 6 H7" fill="none" stroke="#444" stroke-width="0.9"/></svg>
<div class="a" style="left:227px;top:62.9px;width:11.6px;height:2.5px;background:#111;"></div>
<svg class="a" style="left:243px;top:57.6px;" width="6" height="4" viewBox="0 0 6 4"><path d="M1 1 L3 3 L5 1" fill="none" stroke="#444" stroke-width="1.1"/></svg>
<div class="t" style="left:157.6px;top:81px;font-size:8.28px;color:#3a3a3a;transform:scaleX(0.9723);-webkit-text-stroke:0.12px #3a3a3a;">Fonte</div>
<svg class="a" style="left:248.5px;top:81.3px;" width="6" height="6" viewBox="0 0 6 6"><path d="M0.5 5.5 V0.5 H5.5" fill="none" stroke="#666" stroke-width="0.9"/><path d="M2 2 L5.5 5.5 M3 5.5 H5.5 V3" fill="none" stroke="#444" stroke-width="0.9"/></svg>
<svg class="a" style="left:267px;top:31.2px;" width="10" height="10" viewBox="0 0 10 10.0"><rect x="0.0" y="0.0" width="10" height="0.9" fill="#555"/><rect x="1.25" y="3.0" width="7.5" height="0.9" fill="#555"/><rect x="0.0" y="6.0" width="10" height="0.9" fill="#555"/></svg>
<svg class="a" style="left:285.8px;top:33.2px;" width="10" height="10" viewBox="0 0 10 10.0"><rect x="0.0" y="0.0" width="10" height="0.9" fill="#555"/><rect x="1.25" y="3.0" width="7.5" height="0.9" fill="#555"/><rect x="0.0" y="6.0" width="10" height="0.9" fill="#555"/></svg>
<div class="a" style="left:300.7px;top:28.5px;width:17px;height:17.1px;background:#e6e6e6;border:1px solid #8a8a8a;border-radius:3px"></div>
<svg class="a" style="left:304.2px;top:35.2px;" width="10" height="10" viewBox="0 0 10 10.0"><rect x="0.0" y="0.0" width="10" height="0.9" fill="#555"/><rect x="0.0" y="3.0" width="10" height="0.9" fill="#555"/><rect x="0.0" y="6.0" width="10" height="0.9" fill="#555"/></svg>
<svg class="a" style="left:321.5px;top:31px;" width="14" height="12" viewBox="0 0 14 12"><text x="0" y="8" font-size="7" font-family="Liberation Sans" fill="#555" transform="rotate(-40 4 6)">ab</text><path d="M4 11 L11.5 3.5 M9 3.3 H11.7 V6" fill="none" stroke="#3b8fd0" stroke-width="1"/></svg>
<svg class="a" style="left:336.2px;top:35.5px;" width="6" height="4" viewBox="0 0 6 4"><path d="M1 1 L3 3 L5 1" fill="none" stroke="#444" stroke-width="1.1"/></svg>
<svg class="a" style="left:367px;top:31px;" width="13" height="13" viewBox="0 0 13 13"><text x="0.8" y="6" font-size="7.4" font-family="Liberation Sans" fill="#444">ab</text><text x="0.8" y="12.2" font-size="7.4" font-family="Liberation Sans" fill="#444">c</text><path d="M11.5 6.8 V9 Q11.5 10.8 9.8 10.8 H6 M7.6 9.2 L6 10.8 L7.6 12.4" fill="none" stroke="#3b8fd0" stroke-width="1"/></svg>
<svg class="a" style="left:267px;top:54.4px;" width="10" height="11.8" viewBox="0 0 10 11.8"><rect x="0" y="0.0" width="10" height="0.9" fill="#555"/><rect x="0" y="2.7" width="6.5" height="0.9" fill="#555"/><rect x="0" y="5.4" width="10" height="0.9" fill="#555"/><rect x="0" y="8.100000000000001" width="6.5" height="0.9" fill="#555"/></svg>
<svg class="a" style="left:285.8px;top:54.4px;" width="10" height="11.8" viewBox="0 0 10 11.8"><rect x="0.0" y="0.0" width="10" height="0.9" fill="#555"/><rect x="1.75" y="2.7" width="6.5" height="0.9" fill="#555"/><rect x="0.0" y="5.4" width="10" height="0.9" fill="#555"/><rect x="1.75" y="8.100000000000001" width="6.5" height="0.9" fill="#555"/></svg>
<svg class="a" style="left:304px;top:54.4px;" width="10" height="11.8" viewBox="0 0 10 11.8"><rect x="0" y="0.0" width="10" height="0.9" fill="#555"/><rect x="3.5" y="2.7" width="6.5" height="0.9" fill="#555"/><rect x="0" y="5.4" width="10" height="0.9" fill="#555"/><rect x="3.5" y="8.100000000000001" width="6.5" height="0.9" fill="#555"/></svg>
<svg class="a" style="left:322.7px;top:54.2px;" width="11" height="11" viewBox="0 0 11 11"><rect x="0" y="0" width="10" height="0.9" fill="#555"/><rect x="5" y="2.7" width="5" height="0.9" fill="#555"/><rect x="5" y="5.4" width="5" height="0.9" fill="#555"/><rect x="0" y="8.1" width="10" height="0.9" fill="#555"/><path d="M4.5 4.2 H0.8 M2.3 2.7 L0.8 4.2 L2.3 5.7" fill="none" stroke="#2f7fc0" stroke-width="0.9"/></svg>
<svg class="a" style="left:341.1px;top:54.2px;" width="11" height="11" viewBox="0 0 11 11"><rect x="0" y="0" width="10" height="0.9" fill="#555"/><rect x="5" y="2.7" width="5" height="0.9" fill="#555"/><rect x="5" y="5.4" width="5" height="0.9" fill="#555"/><rect x="0" y="8.1" width="10" height="0.9" fill="#555"/><path d="M0.5 4.2 H4.2 M2.7 2.7 L4.2 4.2 L2.7 5.7" fill="none" stroke="#2f7fc0" stroke-width="0.9"/></svg>
<svg class="a" style="left:366.5px;top:53.5px;" width="12" height="12" viewBox="0 0 12 12"><rect x="0.7" y="0.7" width="10.6" height="10.6" fill="#e8f3fb" stroke="#444" stroke-width="0.9"/><path d="M0.7 3.5 H11.3 M0.7 8.5 H11.3" stroke="#666" stroke-width="0.6"/><path d="M2.5 6 H9.5 M4 4.7 L2.5 6 L4 7.3 M8 4.7 L9.5 6 L8 7.3" fill="none" stroke="#2f7fc0" stroke-width="0.9"/></svg>
<svg class="a" style="left:382.8px;top:57.6px;" width="6" height="4" viewBox="0 0 6 4"><path d="M1 1 L3 3 L5 1" fill="none" stroke="#444" stroke-width="1.1"/></svg>
<div class="t" style="left:298.55px;top:81px;font-size:8.28px;color:#3a3a3a;transform:scaleX(1.0096);-webkit-text-stroke:0.12px #3a3a3a;">Alinhamento</div>
<svg class="a" style="left:390px;top:81.3px;" width="6" height="6" viewBox="0 0 6 6"><path d="M0.5 5.5 V0.5 H5.5" fill="none" stroke="#666" stroke-width="0.9"/><path d="M2 2 L5.5 5.5 M3 5.5 H5.5 V3" fill="none" stroke="#444" stroke-width="0.9"/></svg>
<div class="a" style="left:404.4px;top:28.7px;width:103.9px;height:16.9px;background:#fff;border:1px solid #9f9f9f;border-radius:3px"></div>
<div class="t" style="left:406.6px;top:33px;font-size:9.01px;color:#262626;transform:scaleX(0.8531);-webkit-text-stroke:0.12px #262626;">Geral</div>
<svg class="a" style="left:500.5px;top:35.2px;" width="6" height="4" viewBox="0 0 6 4"><path d="M1 1 L3 3 L5 1" fill="none" stroke="#444" stroke-width="1.1"/></svg>
<svg class="a" style="left:406.5px;top:55.5px;" width="13" height="11" viewBox="0 0 13 11"><rect x="0.6" y="0.8" width="10" height="6.8" fill="#fff" stroke="#555" stroke-width="0.9"/><text x="1.6" y="6" font-size="4.5" font-family="Liberation Sans" fill="#555">€$</text><rect x="7" y="5.5" width="5.5" height="5" rx="1" fill="#f2a93b"/></svg>
<svg class="a" style="left:422.8px;top:57.6px;" width="6" height="4" viewBox="0 0 6 4"><path d="M1 1 L3 3 L5 1" fill="none" stroke="#444" stroke-width="1.1"/></svg>
<div class="t" style="left:436.7px;top:54px;font-size:13.37px;color:#444;transform:scaleX(0.8747);-webkit-text-stroke:0.12px #444;">%</div>
<div class="t" style="left:454.6px;top:57px;font-size:7.99px;color:#777;transform:scaleX(0.8472);-webkit-text-stroke:0.12px #777;">000</div>
<svg class="a" style="left:474.5px;top:54px;" width="14" height="12" viewBox="0 0 14 12"><text x="6.2" y="5.6" font-size="6.6" font-family="Liberation Sans" fill="#555">,0</text><text x="4.2" y="11.6" font-size="6.6" font-family="Liberation Sans" fill="#555">,00</text><path d="M6 3 H1 M2.6 1.4 L1 3 L2.6 4.6" fill="none" stroke="#2f7fc0" stroke-width="1"/></svg>
<svg class="a" style="left:493.5px;top:54px;" width="14" height="12" viewBox="0 0 14 12"><text x="4.2" y="5.6" font-size="6.6" font-family="Liberation Sans" fill="#555">,00</text><text x="7" y="11.6" font-size="6.6" font-family="Liberation Sans" fill="#555">,0</text><path d="M0.8 9 H6 M4.4 7.4 L6 9 L4.4 10.6" fill="none" stroke="#2f7fc0" stroke-width="1"/></svg>
<div class="t" style="left:435.95px;top:81px;font-size:8.28px;color:#3a3a3a;transform:scaleX(0.9672);-webkit-text-stroke:0.12px #3a3a3a;">Número</div>
<svg class="a" style="left:506px;top:81.3px;" width="6" height="6" viewBox="0 0 6 6"><path d="M0.5 5.5 V0.5 H5.5" fill="none" stroke="#666" stroke-width="0.9"/><path d="M2 2 L5.5 5.5 M3 5.5 H5.5 V3" fill="none" stroke="#444" stroke-width="0.9"/></svg>
<svg class="a" style="left:522.5px;top:26px;" width="12" height="11" viewBox="0 0 12 11"><rect x="0.5" y="0.5" width="11" height="10" fill="#fff" stroke="#5a5a5a" stroke-width="0.9"/><rect x="1" y="1.5" width="10" height="2" fill="#e06060"/><rect x="1" y="7.5" width="10" height="2" fill="#e06060"/><rect x="1.5" y="4" width="1.6" height="3" fill="#4a9ad8"/><path d="M3.5 0.5 V10.5 M8 0.5 V10.5" stroke="#666" stroke-width="0.7"/></svg>
<div class="t" style="left:537.1px;top:28px;font-size:8.87px;color:#262626;transform:scaleX(0.9646);-webkit-text-stroke:0.12px #262626;">Formatação Condicional</div>
<svg class="a" style="left:631.6px;top:29.5px;" width="6" height="4" viewBox="0 0 6 4"><path d="M1 1 L3 3 L5 1" fill="none" stroke="#444" stroke-width="1.1"/></svg>
<svg class="a" style="left:522.5px;top:44.9px;" width="12" height="11" viewBox="0 0 12 11"><rect x="0.5" y="0.5" width="11" height="10" fill="#fff" stroke="#5a5a5a" stroke-width="0.9"/><path d="M0.5 3.5 H11.5 M0.5 6.5 H11.5 M3.5 0.5 V10.5" stroke="#888" stroke-width="0.6" stroke-dasharray="1 0.7"/><path d="M4 10.5 L11 10.5 L11 4.5 Z" fill="#4a9ad8"/><path d="M3.5 10 L10.5 3" stroke="#555" stroke-width="1.1"/></svg>
<div class="t" style="left:537.1px;top:46px;font-size:8.87px;color:#262626;transform:scaleX(0.9510);-webkit-text-stroke:0.12px #262626;">Formatar como Tabela</div>
<svg class="a" style="left:622.8px;top:48.4px;" width="6" height="4" viewBox="0 0 6 4"><path d="M1 1 L3 3 L5 1" fill="none" stroke="#444" stroke-width="1.1"/></svg>
<svg class="a" style="left:522.5px;top:63.4px;" width="12" height="11" viewBox="0 0 12 11"><rect x="0.5" y="0.5" width="11" height="10" fill="#cfe4f7" stroke="#5a5a5a" stroke-width="0.9"/><path d="M0.5 2.5 H11.5" stroke="#888" stroke-width="0.6"/><path d="M2 10.5 L4 8 L10.5 1.5 L11.5 2.5 L5 9 Z" fill="#4a9ad8" stroke="#555" stroke-width="0.6"/></svg>
<div class="t" style="left:537.1px;top:65px;font-size:8.87px;color:#262626;transform:scaleX(0.9131);-webkit-text-stroke:0.12px #262626;">Estilos de Célula</div>
<svg class="a" style="left:599.4px;top:66.9px;" width="6" height="4" viewBox="0 0 6 4"><path d="M1 1 L3 3 L5 1" fill="none" stroke="#444" stroke-width="1.1"/></svg>
<div class="t" style="left:570.2px;top:81px;font-size:8.28px;color:#3a3a3a;transform:scaleX(0.9507);-webkit-text-stroke:0.12px #3a3a3a;">Estilos</div>
<svg class="a" style="left:658px;top:26px;" width="12" height="12" viewBox="0 0 12 12"><rect x="0.5" y="0.5" width="11" height="10" fill="#fff" stroke="#5a5a5a" stroke-width="1"/><rect x="5.5" y="3" width="5.5" height="4.5" fill="#3c98e0"/><path d="M1 3 H11 M1 7.5 H11" stroke="#777" stroke-width="0.6" stroke-dasharray="1.2 0.8"/><path d="M5 5.2 H1.5 M3 3.8 L1.5 5.2 L3 6.6" stroke="#56a8e0" stroke-width="0.9" fill="none"/></svg>
<div class="t" style="left:672.8px;top:28px;font-size:8.87px;color:#262626;transform:scaleX(0.9174);-webkit-text-stroke:0.12px #262626;">Inserir</div>
<svg class="a" style="left:703.5px;top:29.5px;" width="6" height="4" viewBox="0 0 6 4"><path d="M1 1 L3 3 L5 1" fill="none" stroke="#444" stroke-width="1.1"/></svg>
<svg class="a" style="left:658px;top:44.5px;" width="12" height="12" viewBox="0 0 12 12"><path d="M0.5 0.5 H11.5 M0.5 9.5 H11.5 M0.5 0.5 V9.5 M11.5 0.5 V9.5" stroke="#5a5a5a" stroke-width="1" fill="none"/><path d="M1 3.5 H11 M1 6.5 H11" stroke="#888" stroke-width="0.6" stroke-dasharray="1.2 0.8"/><path d="M1 3.3 H4.5 Q6 3.3 6 5 Q6 6.7 4.5 6.7 H1 Z" fill="#3c98e0"/><path d="M8 3.5 L10.5 6.5 M10.5 3.5 L8 6.5" stroke="#e04848" stroke-width="0.9"/></svg>
<div class="t" style="left:672.8px;top:46px;font-size:8.87px;color:#262626;transform:scaleX(0.9247);-webkit-text-stroke:0.12px #262626;">Excluir</div>
<svg class="a" style="left:705.7px;top:48px;" width="6" height="4" viewBox="0 0 6 4"><path d="M1 1 L3 3 L5 1" fill="none" stroke="#444" stroke-width="1.1"/></svg>
<svg class="a" style="left:658px;top:63px;" width="12" height="12" viewBox="0 0 12 12"><rect x="0.5" y="1" width="11" height="10.5" fill="#fff" stroke="#5a5a5a" stroke-width="1"/><rect x="3" y="3.5" width="6" height="5.5" fill="#3c98e0"/><path d="M0.5 3.5 H11.5 M0.5 9 H11.5 M3 1 V11.5 M9 1 V11.5" stroke="#888" stroke-width="0.6"/><path d="M2 0.4 H10" stroke="#3c98e0" stroke-width="0.8"/></svg>
<div class="t" style="left:672.8px;top:65px;font-size:8.87px;color:#262626;transform:scaleX(0.9370);-webkit-text-stroke:0.12px #262626;">Formatar</div>
<svg class="a" style="left:708.9px;top:66.5px;" width="6" height="4" viewBox="0 0 6 4"><path d="M1 1 L3 3 L5 1" fill="none" stroke="#444" stroke-width="1.1"/></svg>
<div class="t" style="left:675.1px;top:81px;font-size:8.28px;color:#3a3a3a;transform:scaleX(0.9410);-webkit-text-stroke:0.12px #3a3a3a;">Células</div>
<svg class="a" style="left:736.3px;top:26.2px;" width="10.5" height="10.5" viewBox="0 0 10.5 10.5"><path d="M9.5 1 H1 L5.2 5.2 L1 9.5 H9.5" fill="none" stroke="#444" stroke-width="0.9"/></svg>
<svg class="a" style="left:751.3px;top:29.5px;" width="6" height="4" viewBox="0 0 6 4"><path d="M1 1 L3 3 L5 1" fill="none" stroke="#444" stroke-width="1.1"/></svg>
<svg class="a" style="left:735.5px;top:44.5px;" width="12" height="11" viewBox="0 0 12 11"><rect x="0.6" y="0.6" width="10.8" height="9.8" fill="#fff" stroke="#444" stroke-width="0.9"/><rect x="1.5" y="2.4" width="9" height="7.2" fill="#dff0fa"/><path d="M6 3 V8 M4.3 6.3 L6 8 L7.7 6.3" fill="none" stroke="#2f7fc0" stroke-width="0.9"/></svg>
<svg class="a" style="left:750.3px;top:48.5px;" width="6" height="4" viewBox="0 0 6 4"><path d="M1 1 L3 3 L5 1" fill="none" stroke="#444" stroke-width="1.1"/></svg>
<svg class="a" style="left:735.3px;top:63.5px;" width="12" height="11" viewBox="0 0 12 11"><path d="M1 6 L6 1 L11 5.5 L6 10.5 Z" fill="#fff" stroke="#a040c0" stroke-width="0.9"/><path d="M1 6 L3.5 3.5 L8.5 8 L6 10.5 Z" fill="#c77ee0" stroke="#a040c0" stroke-width="0.9"/></svg>
<svg class="a" style="left:750.3px;top:66.5px;" width="6" height="4" viewBox="0 0 6 4"><path d="M1 1 L3 3 L5 1" fill="none" stroke="#444" stroke-width="1.1"/></svg>
<svg class="a" style="left:772.5px;top:27px;" width="22" height="20" viewBox="0 0 22 20"><path d="M1 8.4 L4.5 0.8 L8 8.4 M2.3 5.8 H6.7" fill="none" stroke="#3b8fd0" stroke-width="1"/><path d="M1.3 10.6 H7.6 L1.3 18.4 H7.8" fill="none" stroke="#444" stroke-width="1"/><path d="M9.8 4 H20.5 L16.3 9 V15.5 H14 V9 Z" fill="#fff" stroke="#444" stroke-width="0.9"/></svg>
<div class="t" style="left:764.3px;top:52px;font-size:8.87px;color:#262626;transform:scaleX(0.9195);-webkit-text-stroke:0.12px #262626;">Classificar</div>
<div class="t" style="left:765.3px;top:64px;font-size:8.87px;color:#262626;transform:scaleX(0.8985);-webkit-text-stroke:0.12px #262626;">e Filtrar</div>
<svg class="a" style="left:794.5px;top:64.8px;" width="6" height="4" viewBox="0 0 6 4"><path d="M1 1 L3 3 L5 1" fill="none" stroke="#444" stroke-width="1.1"/></svg>
<svg class="a" style="left:818.5px;top:25px;" width="24" height="23" viewBox="0 0 24 23"><circle cx="14.6" cy="8.5" r="7.2" fill="none" stroke="#444" stroke-width="1"/><path d="M9.5 13.6 L1.8 21.3" stroke="#444" stroke-width="1.1"/></svg>
<div class="t" style="left:810.7px;top:52px;font-size:8.87px;color:#262626;transform:scaleX(0.9212);-webkit-text-stroke:0.12px #262626;">Localizar e</div>
<div class="t" style="left:807px;top:64px;font-size:8.87px;color:#262626;transform:scaleX(0.9070);-webkit-text-stroke:0.12px #262626;">Selecionar</div>
<svg class="a" style="left:847px;top:64.8px;" width="6" height="4" viewBox="0 0 6 4"><path d="M1 1 L3 3 L5 1" fill="none" stroke="#444" stroke-width="1.1"/></svg>
<div class="t" style="left:781.9px;top:81px;font-size:8.28px;color:#3a3a3a;transform:scaleX(0.9395);-webkit-text-stroke:0.12px #3a3a3a;">Edição</div>
<svg class="a" style="left:893.5px;top:25.5px;" width="20" height="22" viewBox="0 0 20 22"><path d="M1.5 2 H11 L15.5 6.5 V20.8 H1.5 Z" fill="#ececec" stroke="#d4d4d4" stroke-width="0.9"/><path d="M6 15 L15 6 L18.5 9.5 L9.5 18.5 Z" fill="#d8d8d8" stroke="#c8c8c8" stroke-width="0.8"/><path d="M12.5 3 L16 0.8 L19 4 L16.5 7.5 Z" fill="#e4e4e4" stroke="#c8c8c8" stroke-width="0.8"/></svg>
<div class="t" style="left:869px;top:52px;font-size:8.87px;color:#b9b9b9;transform:scaleX(0.9647);-webkit-text-stroke:0.12px #b9b9b9;">Confidencialidade</div>
<svg class="a" style="left:899.4px;top:65px;" width="6" height="4" viewBox="0 0 6 4"><path d="M1 1 L3 3 L5 1" fill="none" stroke="#bdbdbd" stroke-width="1.1"/></svg>
<div class="t" style="left:869.5px;top:81px;font-size:8.28px;color:#3a3a3a;transform:scaleX(1.0126);-webkit-text-stroke:0.12px #3a3a3a;">Confidencialidade</div>
<svg class="a" style="left:966.5px;top:26px;" width="21" height="21" viewBox="0 0 21 21"><rect x="0.8" y="0.8" width="19.4" height="19.4" rx="1" fill="#fff" stroke="#c07a50" stroke-width="1.3"/><rect x="3.3" y="3.3" width="6.2" height="6.2" fill="#fff" stroke="#b9754a" stroke-width="0.9"/><rect x="11.5" y="3.3" width="6.2" height="6.2" fill="#fff" stroke="#b9754a" stroke-width="0.9"/><rect x="3.3" y="11.5" width="6.2" height="6.2" fill="#fff" stroke="#b9754a" stroke-width="0.9"/><rect x="11.5" y="11.5" width="6.2" height="6.2" fill="#fff" stroke="#b9754a" stroke-width="0.9"/></svg>
<div class="t" style="left:952px;top:52px;font-size:8.87px;color:#262626;transform:scaleX(0.9468);-webkit-text-stroke:0.12px #262626;">Suplementos</div>
<div class="t" style="left:952.75px;top:81px;font-size:8.28px;color:#3a3a3a;transform:scaleX(0.9822);-webkit-text-stroke:0.12px #3a3a3a;">Suplementos</div>
<svg class="a" style="left:1015px;top:78px;" width="9" height="6" viewBox="0 0 9 6"><path d="M1 1 L4.5 4.5 L8 1" fill="none" stroke="#444" stroke-width="1"/></svg>
<div class="a" style="left:6.5px;top:97px;width:152.5px;height:18.6px;background:#fff;border:1px solid #e2e2e2;border-radius:4px"></div>
<div class="t" style="left:11.8px;top:103px;font-size:9.01px;color:#262626;transform:scaleX(0.9888);-webkit-text-stroke:0.12px #262626;">A1</div>
<svg class="a" style="left:148.35px;top:105.1px;" width="6.9" height="4.6" viewBox="0 0 6 4"><path d="M1 1 L3 3 L5 1" fill="none" stroke="#444" stroke-width="1.1"/></svg>
<svg class="a" style="left:165px;top:102.5px;" width="4" height="9" viewBox="0 0 4 9"><circle cx="2" cy="1.2" r="0.8" fill="#555"/><circle cx="2" cy="4.5" r="0.8" fill="#555"/><circle cx="2" cy="7.8" r="0.8" fill="#555"/></svg>
<div class="a" style="left:175.2px;top:97px;width:50.8px;height:18.6px;background:#fff;border:1px solid #e2e2e2;border-radius:4px"></div>
<svg class="a" style="left:178.5px;top:102px;" width="10" height="10" viewBox="0 0 10 10"><path d="M1 1 L9 9 M9 1 L1 9" stroke="#b0b0b0" stroke-width="0.9"/></svg>
<svg class="a" style="left:194.5px;top:102px;" width="12" height="10" viewBox="0 0 12 10"><path d="M1 5 L4.5 8.5 L11 1.5" fill="none" stroke="#b0b0b0" stroke-width="0.9"/></svg>
<div class="t" style="left:213.3px;top:103px;font-size:10.47px;color:#333;transform:scaleX(1.2712);font-style:italic;-webkit-text-stroke:0.12px #333;font-family:"Liberation Serif",serif;">fx</div>
<div class="a" style="left:230.5px;top:97px;width:803.5px;height:18.6px;background:#fff;border:1px solid #e2e2e2;border-radius:4px"></div>
<svg class="a" style="left:1017px;top:104px;" width="9" height="6" viewBox="0 0 9 6"><path d="M1 1 L4.5 4.5 L8 1" fill="none" stroke="#444" stroke-width="1"/></svg>
</body></html>
